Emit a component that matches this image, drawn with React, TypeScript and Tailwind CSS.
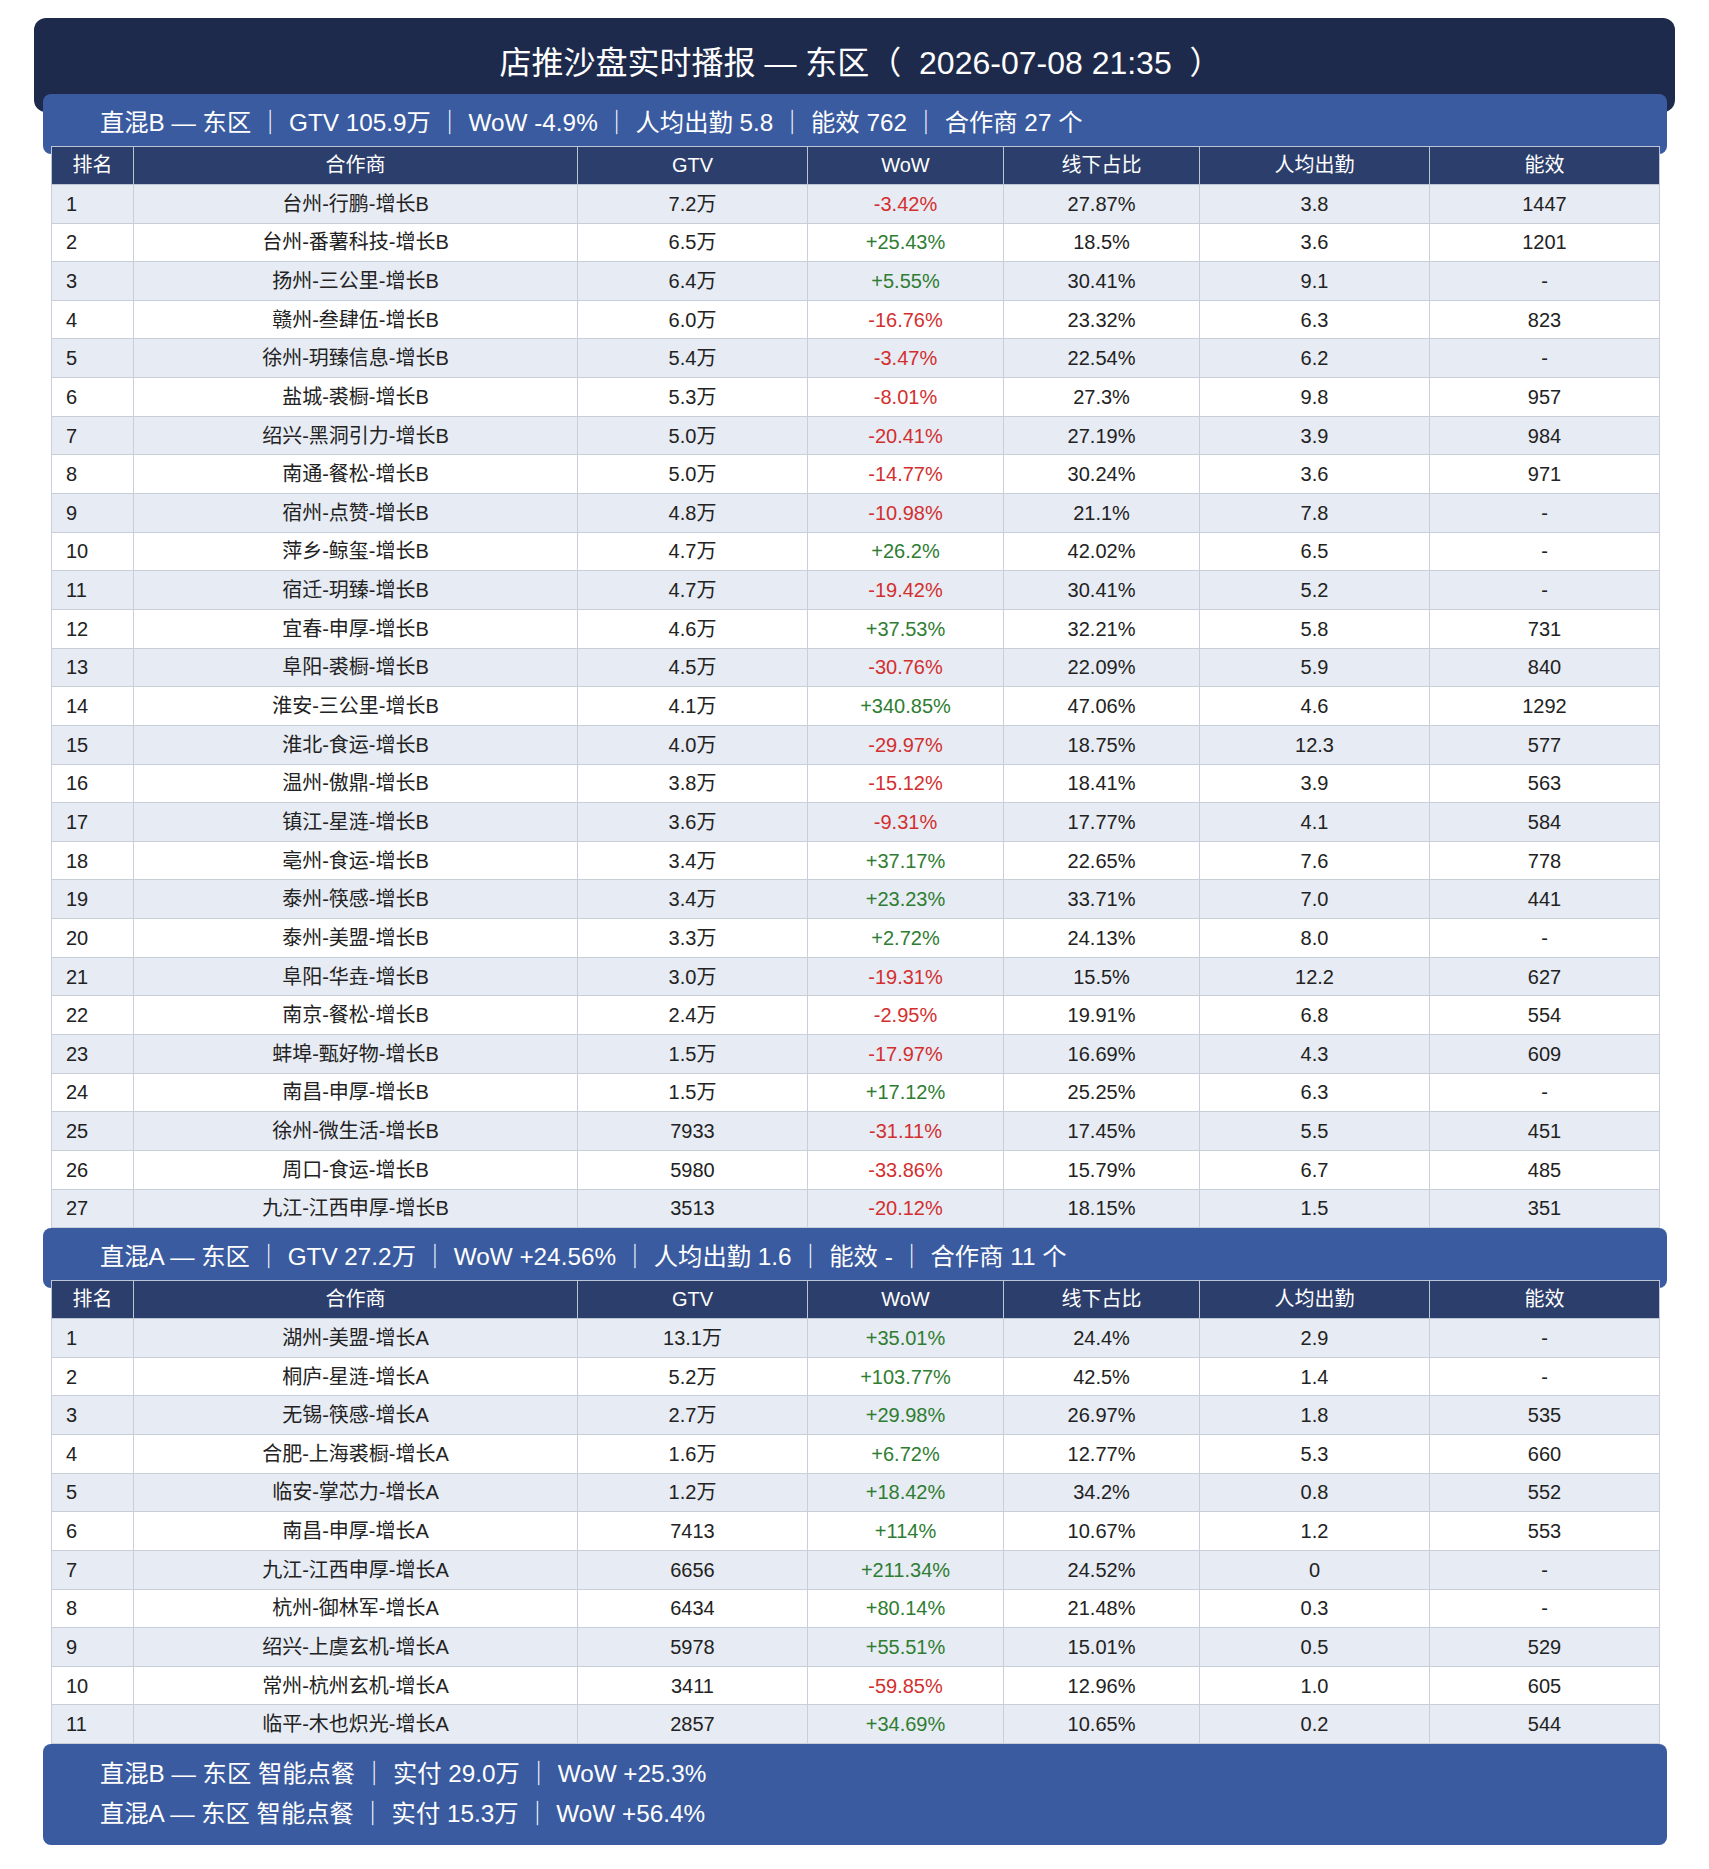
import React from "react";

type Row = [string, string, string, string, string, string];

const groupB: Row[] = [
  ["台州-行鹏-增长B", "7.2万", "-3.42%", "27.87%", "3.8", "1447"],
  ["台州-番薯科技-增长B", "6.5万", "+25.43%", "18.5%", "3.6", "1201"],
  ["扬州-三公里-增长B", "6.4万", "+5.55%", "30.41%", "9.1", "-"],
  ["赣州-叁肆伍-增长B", "6.0万", "-16.76%", "23.32%", "6.3", "823"],
  ["徐州-玥臻信息-增长B", "5.4万", "-3.47%", "22.54%", "6.2", "-"],
  ["盐城-裘橱-增长B", "5.3万", "-8.01%", "27.3%", "9.8", "957"],
  ["绍兴-黑洞引力-增长B", "5.0万", "-20.41%", "27.19%", "3.9", "984"],
  ["南通-餐松-增长B", "5.0万", "-14.77%", "30.24%", "3.6", "971"],
  ["宿州-点赞-增长B", "4.8万", "-10.98%", "21.1%", "7.8", "-"],
  ["萍乡-鲸玺-增长B", "4.7万", "+26.2%", "42.02%", "6.5", "-"],
  ["宿迁-玥臻-增长B", "4.7万", "-19.42%", "30.41%", "5.2", "-"],
  ["宜春-申厚-增长B", "4.6万", "+37.53%", "32.21%", "5.8", "731"],
  ["阜阳-裘橱-增长B", "4.5万", "-30.76%", "22.09%", "5.9", "840"],
  ["淮安-三公里-增长B", "4.1万", "+340.85%", "47.06%", "4.6", "1292"],
  ["淮北-食运-增长B", "4.0万", "-29.97%", "18.75%", "12.3", "577"],
  ["温州-傲鼎-增长B", "3.8万", "-15.12%", "18.41%", "3.9", "563"],
  ["镇江-星涟-增长B", "3.6万", "-9.31%", "17.77%", "4.1", "584"],
  ["亳州-食运-增长B", "3.4万", "+37.17%", "22.65%", "7.6", "778"],
  ["泰州-筷感-增长B", "3.4万", "+23.23%", "33.71%", "7.0", "441"],
  ["泰州-美盟-增长B", "3.3万", "+2.72%", "24.13%", "8.0", "-"],
  ["阜阳-华垚-增长B", "3.0万", "-19.31%", "15.5%", "12.2", "627"],
  ["南京-餐松-增长B", "2.4万", "-2.95%", "19.91%", "6.8", "554"],
  ["蚌埠-甄好物-增长B", "1.5万", "-17.97%", "16.69%", "4.3", "609"],
  ["南昌-申厚-增长B", "1.5万", "+17.12%", "25.25%", "6.3", "-"],
  ["徐州-微生活-增长B", "7933", "-31.11%", "17.45%", "5.5", "451"],
  ["周口-食运-增长B", "5980", "-33.86%", "15.79%", "6.7", "485"],
  ["九江-江西申厚-增长B", "3513", "-20.12%", "18.15%", "1.5", "351"],
];

const groupA: Row[] = [
  ["湖州-美盟-增长A", "13.1万", "+35.01%", "24.4%", "2.9", "-"],
  ["桐庐-星涟-增长A", "5.2万", "+103.77%", "42.5%", "1.4", "-"],
  ["无锡-筷感-增长A", "2.7万", "+29.98%", "26.97%", "1.8", "535"],
  ["合肥-上海裘橱-增长A", "1.6万", "+6.72%", "12.77%", "5.3", "660"],
  ["临安-掌芯力-增长A", "1.2万", "+18.42%", "34.2%", "0.8", "552"],
  ["南昌-申厚-增长A", "7413", "+114%", "10.67%", "1.2", "553"],
  ["九江-江西申厚-增长A", "6656", "+211.34%", "24.52%", "0", "-"],
  ["杭州-御林军-增长A", "6434", "+80.14%", "21.48%", "0.3", "-"],
  ["绍兴-上虞玄机-增长A", "5978", "+55.51%", "15.01%", "0.5", "529"],
  ["常州-杭州玄机-增长A", "3411", "-59.85%", "12.96%", "1.0", "605"],
  ["临平-木也炽光-增长A", "2857", "+34.69%", "10.65%", "0.2", "544"],
];

const headers = ["排名", "合作商", "GTV", "WoW", "线下占比", "人均出勤", "能效"];
const widths = ["w-[82px]", "w-[444px]", "w-[230px]", "w-[196px]", "w-[196px]", "w-[230px]", "w-[230px]"];

const Section = ({ title, rows }: { title: string; rows: Row[] }) => (
  <div className="ml-[9px] mr-[8px]">
    <div className="h-[60px] rounded-[8px] bg-[#3a5ba0] pl-[57px] pt-[13px] text-[24.3px] leading-[32px] text-white whitespace-pre">
      {title}
    </div>
    <table className="relative mx-[8px] -mt-[8.5px] w-[1608px] table-fixed border-collapse text-[20px]">
      <colgroup>
        {widths.map((w, i) => (
          <col key={i} className={w} />
        ))}
      </colgroup>
      <thead>
        <tr className="bg-[#2c3e6b] text-white">
          {headers.map((h) => (
            <th
              key={h}
              className="h-[38.4px] border border-[#bcc5d4] p-0 text-center font-normal leading-[24px]"
            >
              {h}
            </th>
          ))}
        </tr>
      </thead>
      <tbody>
        {rows.map((r, i) => (
          <tr key={i} className={i % 2 === 0 ? "bg-[#e7ebf3]" : "bg-white"}>
            <td className="h-[38.65px] border border-[#c8cfdb] px-[14px] py-0 leading-[24px] text-[#222]">
              {i + 1}
            </td>
            {r.map((c, j) => (
              <td
                key={j}
                className={`h-[38.65px] border border-[#c8cfdb] p-0 text-center leading-[24px] ${
                  j === 2
                    ? c.startsWith("-")
                      ? "text-[#d32f2f]"
                      : "text-[#2e7d32]"
                    : "text-[#222]"
                }`}
              >
                {c}
              </td>
            ))}
          </tr>
        ))}
      </tbody>
    </table>
  </div>
);

export default function App() {
  return (
    <div
      className="w-[1709px] bg-white px-[34px] pt-[18px] pb-[23px]"
      style={{ fontFamily: '"Liberation Sans", "Noto Sans CJK SC", sans-serif' }}
    >
      <div className="h-[94px] rounded-[12px] bg-[#1e2a4b] pl-[12px] pt-[25px] text-center text-[32px] leading-[40px] text-white whitespace-pre">
        {"店推沙盘实时播报 — 东区（  2026-07-08 21:35  ）"}
      </div>
      <div className="-mt-[18px]">
        <Section
          title="直混B — 东区 ｜ GTV 105.9万 ｜ WoW -4.9% ｜ 人均出勤 5.8 ｜ 能效 762 ｜ 合作商 27 个"
          rows={groupB}
        />
        <Section
          title="直混A — 东区 ｜ GTV 27.2万 ｜ WoW +24.56% ｜ 人均出勤 1.6 ｜ 能效 - ｜ 合作商 11 个"
          rows={groupA}
        />
        <div className="ml-[9px] mr-[8px] rounded-[8px] bg-[#3a5ba0] pl-[57px] pt-[10px] pb-[11px] text-[24.3px] leading-[40px] text-white whitespace-pre">
          <div>直混B — 东区 智能点餐 ｜ 实付 29.0万 ｜ WoW +25.3%</div>
          <div>直混A — 东区 智能点餐 ｜ 实付 15.3万 ｜ WoW +56.4%</div>
        </div>
      </div>
    </div>
  );
}
